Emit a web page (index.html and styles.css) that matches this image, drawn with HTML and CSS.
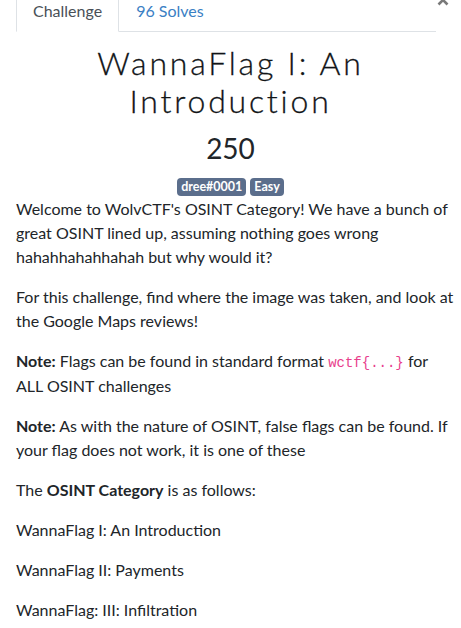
FILE: index.html
```html
<!DOCTYPE html>
<html>
<head>
<meta charset="utf-8">
<link rel="stylesheet" href="styles.css">
</head>
<body>
<div class="modal">
  <div class="header">
    <ul class="tabs">
      <li class="tab active">Challenge</li>
      <li class="tab link">96 Solves</li>
    </ul>
    <button class="close" aria-label="Close">
      <svg width="12" height="12" viewBox="0 0 12 12"><path d="M1.5 1.5 L10.5 10.5 M10.5 1.5 L1.5 10.5" stroke="#7a7a7a" stroke-width="2.6" stroke-linecap="butt"/></svg>
    </button>
  </div>
  <h3 class="title">WannaFlag I: An Introduction</h3>
  <h4 class="value">250</h4>
  <div class="tags">
    <span class="badge">dree#0001</span>
    <span class="badge">Easy</span>
  </div>
  <div class="desc">
    <p>Welcome to WolvCTF's OSINT Category! We have a bunch of great OSINT lined up, assuming nothing goes wrong hahahhahahhahah but why would it?</p>
    <p>For this challenge, find where the image was taken, and look at the Google Maps reviews!</p>
    <p><strong>Note:</strong> Flags can be found in standard format <code>wctf{...}</code> for ALL OSINT challenges</p>
    <p><strong>Note:</strong> As with the nature of OSINT, false flags can be found. If your flag does not work, it is one of these</p>
    <p>The <strong>OSINT Category</strong> is as follows:</p>
    <p>WannaFlag I: An Introduction</p>
    <p>WannaFlag II: Payments</p>
    <p>WannaFlag: III: Infiltration</p>
  </div>
</div>
</body>
</html>
```
FILE: styles.css
```css
html, body {
  margin: 0;
  padding: 0;
  background: #fff;
}
body {
  font-family: "Lato", "Liberation Sans", sans-serif;
  font-size: 16px;
  line-height: 1.5;
  color: #212529;
  overflow: hidden;
}
.modal {
  padding: 0 4px 0 16px;
}
.header {
  display: flex;
  align-items: flex-start;
  margin-top: -10px;
}
.tabs {
  list-style: none;
  margin: 0;
  padding: 0;
  display: flex;
  flex: 0 0 420px;
  border-bottom: 1px solid #dee2e6;
}
.tab {
  padding: 8px 16px;
  margin-bottom: -1px;
  border: 1px solid transparent;
  border-top-left-radius: 4px;
  border-top-right-radius: 4px;
}
.tab.active {
  color: #495057;
  background: #fff;
  border-color: #dee2e6 #dee2e6 #fff;
}
.tab.link {
  color: #3a80c4;
}
.close {
  border: 0;
  background: none;
  padding: 0;
  margin: 4px 0 0 1px;
  line-height: 0;
}
.title {
  font-family: "Lato", sans-serif;
  font-weight: 300;
  font-size: 32px;
  line-height: 1.2;
  letter-spacing: 2.8px;
  text-align: center;
  margin: 12px 12px 0 0;
  color: #111417;
  -webkit-text-stroke: 0.3px #111417;
}
.value {
  font-family: "Lato", sans-serif;
  font-weight: 400;
  font-size: 28px;
  line-height: 1.2;
  text-align: center;
  margin: 11px 12px 0 0;
}
.tags {
  display: flex;
  justify-content: center;
  gap: 4px;
  margin: 13px 12px 0 0;
}
.badge {
  background: #5b6e8c;
  color: #fff;
  font-size: 12.5px;
  font-weight: 700;
  line-height: 1;
  padding: 3px 4px 2px;
  border-radius: 4px;
}
.desc {
  margin-top: 1px;
}
.desc p {
  margin: 0 0 16px;
}
.desc strong {
  font-weight: 700;
}
code {
  font-family: "Liberation Mono", monospace;
  font-size: 14px;
  color: #e83e8c;
}
```
